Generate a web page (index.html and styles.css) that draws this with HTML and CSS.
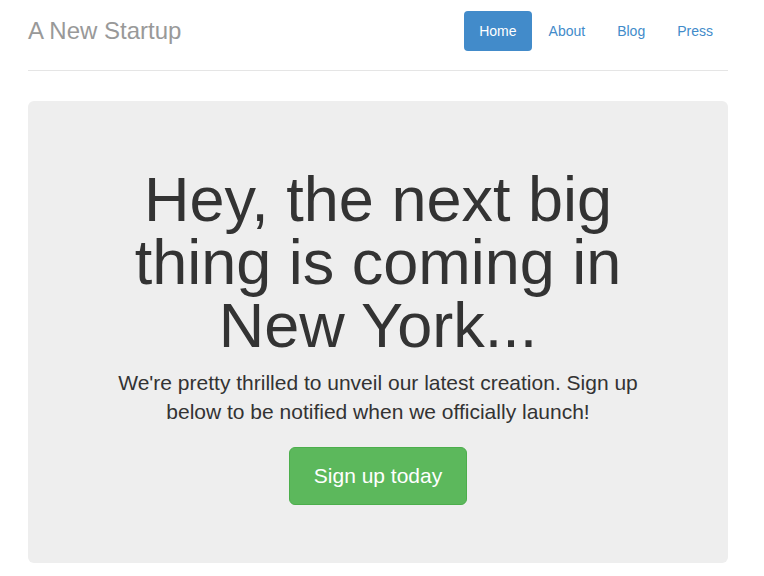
FILE: index.html
```html
<!DOCTYPE html>
<html lang="en">
<head>
<meta charset="utf-8">
<title>A New Startup</title>
<link rel="stylesheet" href="styles.css">
</head>
<body>
<div class="container">
  <header class="header">
    <h3 class="brand">A New Startup</h3>
    <nav>
      <ul class="pills">
        <li><a class="pill active" href="#">Home</a></li>
        <li><a class="pill" href="#">About</a></li>
        <li><a class="pill" href="#">Blog</a></li>
        <li><a class="pill" href="#">Press</a></li>
      </ul>
    </nav>
  </header>
  <section class="jumbotron">
    <h1 class="hero-title">Hey, the next big thing is coming in New York...</h1>
    <p class="lead">We're pretty thrilled to unveil our latest creation. Sign up below to be notified when we officially launch!</p>
    <a class="btn-signup" href="#">Sign up today</a>
  </section>
</div>
</body>
</html>
```
FILE: styles.css
```css
* { box-sizing: border-box; }
html, body {
  margin: 0;
  padding: 0;
  background: #fff;
}
body {
  font-family: "Liberation Sans", Arial, sans-serif;
  font-size: 14px;
  line-height: 20px;
  color: #333;
}
.container {
  width: 700px;
  margin-left: 28px;
}
.header {
  display: flex;
  justify-content: space-between;
  align-items: center;
  padding-top: 11px;
  padding-bottom: 19px;
  border-bottom: 1px solid #e5e5e5;
  margin-bottom: 30px;
}
.brand {
  margin: 0;
  font-size: 24px;
  font-weight: normal;
  line-height: 40px;
  color: #999;
}
.pills {
  display: flex;
  list-style: none;
  margin: 0;
  padding: 0;
  gap: 2px;
}
.pill {
  display: block;
  padding: 10px 15px;
  line-height: 20px;
  font-size: 14px;
  color: #428bca;
  text-decoration: none;
  border-radius: 4px;
}
.pill.active {
  background: #428bca;
  color: #fff;
}
.jumbotron {
  background: #eee;
  border-radius: 6px;
  padding: 67px 60px 58px;
  text-align: center;
  display: flex;
  flex-direction: column;
  align-items: center;
}
.hero-title {
  margin: 0 0 11px;
  font-size: 63px;
  line-height: 63px;
  font-weight: normal;
  color: #333;
}
.lead {
  margin: 0 0 21px;
  max-width: 540px;
  font-size: 21px;
  line-height: 29px;
  color: #333;
}
.btn-signup {
  display: inline-block;
  padding: 14px 24px;
  font-size: 21px;
  line-height: 28px;
  color: #fff;
  background: #5cb85c;
  border: 1px solid #4cae4c;
  border-radius: 6px;
  text-decoration: none;
}
```
